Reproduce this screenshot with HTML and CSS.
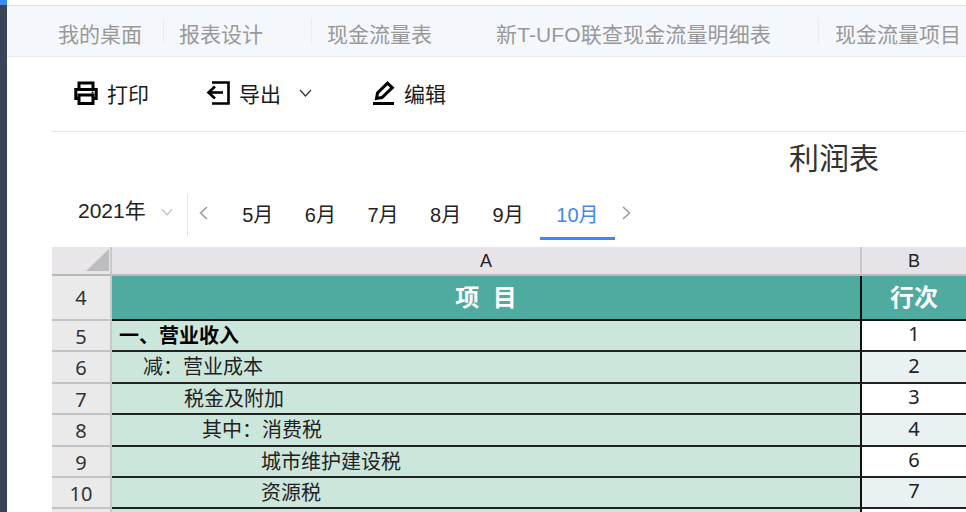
FILE: index.html
```html
<!DOCTYPE html>
<html lang="zh-CN">
<head>
<meta charset="utf-8">
<title>利润表</title>
<link rel="stylesheet" href="styles.css">
</head>
<body>
<div class="page">
  <div class="rail"><div class="rail-top"></div></div>
  <div class="main">
    <nav class="tabs">
      <span class="tab t1">我的桌面</span><i class="sep s1"></i>
      <span class="tab t2">报表设计</span><i class="sep s2"></i>
      <span class="tab t3">现金流量表</span>
      <span class="tab t4">新T-UFO联查现金流量明细表</span><i class="sep s4"></i>
      <span class="tab t5">现金流量项目</span>
    </nav>
    <div class="content">
      <div class="toolbar">
        <span class="tool print">
          <svg width="24" height="24" viewBox="0 0 24 24" fill="none" stroke="#000" stroke-width="3"><path d="M5 8V2h14v6"/><path d="M5 17.500H1.800V8.500h20.400v9H19"/><path d="M5 14h14v8.500H5z"/><circle cx="18.500" cy="11.500" r="1" fill="#000" stroke="none"/></svg>
          <span class="tool-label">打印</span>
        </span>
        <span class="tool export">
          <svg width="24" height="24" viewBox="0 0 24 24" fill="none" stroke="#000" stroke-width="2.600"><path d="M6 1.500h16.500v21H6"/><path d="M17 11.500H3"/><path d="M9 5.500l-6.500 6 6.500 6"/></svg>
          <span class="tool-label">导出</span>
          <svg class="caret" width="13" height="8" viewBox="0 0 13 8" fill="none" stroke="#333" stroke-width="1.200"><path d="M1 1l5.500 6 5.500-6"/></svg>
        </span>
        <span class="tool edit">
          <svg width="22" height="24" viewBox="0 0 22 24" fill="none" stroke="#000" stroke-width="3"><path d="M3.500 17.500l1-5.500L14.500 2.200l4.800 4.500L9 16.500z"/><path d="M0 22.500h21" stroke-width="3"/></svg>
          <span class="tool-label">编辑</span>
        </span>
      </div>
      <h1 class="title">利润表</h1>
      <div class="periods">
        <span class="year">2021年</span>
        <svg class="year-caret" width="12" height="8" viewBox="0 0 12 8" fill="none" stroke="#c4c4c4" stroke-width="1.200"><path d="M1 1l5 6 5-6"/></svg>
        <i class="vline"></i>
        <svg class="prev" width="9" height="14" viewBox="0 0 9 14" fill="none" stroke="#999" stroke-width="1.500"><path d="M8 1L1.500 7 8 13"/></svg>
        <div class="months">
          <span class="month">5月</span>
          <span class="month">6月</span>
          <span class="month">7月</span>
          <span class="month">8月</span>
          <span class="month">9月</span>
          <span class="month active">10月</span>
        </div>
        <svg class="next" width="9" height="14" viewBox="0 0 9 14" fill="none" stroke="#999" stroke-width="1.500"><path d="M1 1l6.500 6L1 13"/></svg>
      </div>
      <div class="sheet">
        <div class="corner"><svg width="23" height="22" viewBox="0 0 23 22"><path d="M23 0v22H0z" fill="#bdbdbf"/></svg></div>
        <div class="col">A</div>
        <div class="col">B</div>

        <div class="rowno tall">4</div>
        <div class="head head-a">项&nbsp;&nbsp;目</div>
        <div class="head head-b">行次</div>

        <div class="rowno">5</div>
        <div class="cell strong">一、营业收入</div>
        <div class="num">1</div>

        <div class="rowno">6</div>
        <div class="cell in-1">减：营业成本</div>
        <div class="num alt">2</div>

        <div class="rowno">7</div>
        <div class="cell in-2">税金及附加</div>
        <div class="num">3</div>

        <div class="rowno">8</div>
        <div class="cell in-3">其中：消费税</div>
        <div class="num alt">4</div>

        <div class="rowno">9</div>
        <div class="cell in-4">城市维护建设税</div>
        <div class="num">6</div>

        <div class="rowno">10</div>
        <div class="cell in-4">资源税</div>
        <div class="num alt">7</div>

        <div class="rowno"></div>
        <div class="cell"></div>
        <div class="num"></div>
      </div>
    </div>
  </div>
</div>
</body>
</html>
```
FILE: styles.css
```css
* { box-sizing: border-box; }
html, body { margin: 0; padding: 0; height: 100%; overflow: hidden; background: #fff; }
body { font-family: "Liberation Sans", "Noto Sans CJK SC", sans-serif; color: #222; }

.page { display: flex; width: 966px; height: 512px; overflow: hidden; }
.rail { flex: 0 0 7px; background: #3a4459; }
.rail-top { height: 5px; background: #3b8cf5; }
.main { flex: 1; min-width: 0; padding-top: 5px; }

.tabs {
  display: flex; align-items: center; height: 52px;
  background: #f4f7fc;
  border-top: 1px solid #dfe3ec; border-bottom: 1px solid #e8ebf0;
  padding: 0 0 0 51px; white-space: nowrap;
  font-size: 21px; color: #999;
}
.tab { line-height: 30px; flex: none; padding-top: 7px; }
.sep { flex: none; width: 1px; height: 26px; background: #e9ecf2; }
.s1 { margin: 0 15px 0 21px; }
.s2 { margin: 0 15px 0 48px; }
.t4 { margin-left: 64px; letter-spacing: 0.130px; }
.s4 { margin: 0 16px 0 47px; }

.content { padding-left: 45px; }

.toolbar {
  display: flex; align-items: center; height: 75px;
  border-bottom: 1px solid #e4e4e4; padding-bottom: 3px;
  font-size: 21px; line-height: 30px; color: #1a1a1a;
}
.tool { display: flex; align-items: center; flex: none; }
.tool-label { padding-top: 4px; }
.print { margin-left: 22px; }
.print svg { margin-right: 9px; }
.export { margin-left: 57px; }
.export > svg:first-child { margin-right: 9px; }
.caret { margin-left: 18px; }
.edit { margin-left: 61px; }
.edit svg { margin-right: 9px; }

.title {
  margin: 0; height: 56px; line-height: 54px;
  font-size: 30px; font-weight: 400; color: #333;
  padding-left: 737px; white-space: nowrap;
}

.periods { display: flex; align-items: center; height: 59px; padding-left: 26px; white-space: nowrap; }
.year { font-size: 21px; color: #222; width: 67px; flex: none; position: relative; top: -9px; }
.year-caret { margin-left: 16px; flex: none; position: relative; top: -6px; }
.vline { flex: none; width: 1px; height: 42px; background: #e2e2e2; margin: 0 11px 0 14px; position: relative; top: -3px; }
.prev { flex: none; position: relative; top: -5px; }
.months { display: flex; margin-left: 18.500px; height: 59px; }
.month {
  flex: none; width: 62.600px; text-align: center; font-size: 20px; color: #222;
  line-height: 54px;
}
.month.active {
  width: 75px; color: #4285f4;
  box-shadow: inset 0 -3px 0 #4285f4;
  height: 52px; margin-left: 0.500px;
}
.next { flex: none; margin-left: 7px; position: relative; top: -5px; }

.sheet {
  display: grid;
  grid-template-columns: 60px 750px 104px;
  grid-template-rows: 29px 45px 31px 32px 31px 32px 31px 31px 32px;
  width: 914px; font-size: 20px; line-height: 1;
}
.sheet > div { display: flex; align-items: center; min-width: 0; white-space: nowrap; }

.corner {
  background: #e8e6e9; border-right: 2px solid #c9c9cb; border-bottom: 2px solid #b9b9bc;
  justify-content: flex-end; padding: 0 1px 2px 0;
}
.col {
  justify-content: center; background: #e6e4e8; color: #222; font-size: 18px;
  border-right: 2px solid #c9c9cb; border-bottom: 2px solid #b9b9bc;
}
.col:nth-child(3) { border-right: 0; }

.rowno {
  justify-content: center; background: #eaeaeb; color: #333; font-size: 20px;
  font-family: "Noto Sans", sans-serif; padding-top: 2px;
  border-right: 2px solid #c9c9cb; border-bottom: 2px solid #c4c4c6;
}
.tall { padding-top: 0; }
.head {
  justify-content: center; background: #4faa9f; color: #fff; font-weight: 700;
  border-bottom: 2px solid #111;
}
.head-a { font-size: 24px; border-right: 2px solid #111; }
.head-b { font-size: 24px; }
.cell {
  background: #cde6dc; color: #222; padding: 0 0 0 8px;
  border-right: 2px solid #111; border-bottom: 2px solid #222;
}
.strong { font-weight: 700; color: #000; padding-left: 7px; }
.in-1 { padding-left: 31px; }
.in-2 { padding-left: 72px; }
.in-3 { padding-left: 90px; }
.in-4 { padding-left: 149px; }
.num {
  justify-content: center; background: #fff; color: #222; padding-bottom: 3px;
  font-family: "Noto Sans", sans-serif;
  border-bottom: 2px solid #222;
}
.num.alt { background: #eaf1f3; }
```
